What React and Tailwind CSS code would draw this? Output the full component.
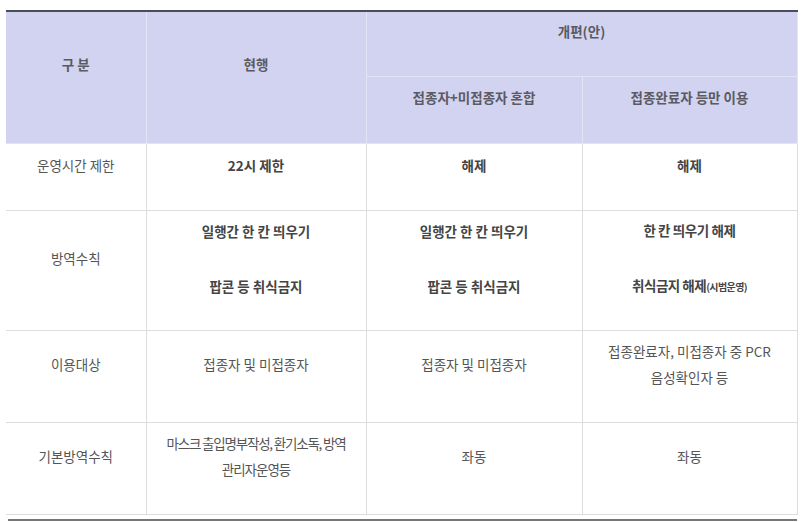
const font = { fontFamily: '"Noto Sans CJK KR", "Noto Sans", sans-serif' };

function Cell({ children, className = '', ...rest }) {
  return (
    <td className={`border border-[#dddddd] text-center align-middle p-0 ${className}`} {...rest}>
      <div className="pb-[24px] leading-[26px]">{children}</div>
    </td>
  );
}

function Head({ children, className = '', ...rest }) {
  return (
    <th className={`border border-[#e4e4f4] bg-[#d2d3f0] text-center align-middle p-0 font-bold text-[#5a5a63] ${className}`} {...rest}>
      <div className="pb-[26px] leading-[26px]">{children}</div>
    </th>
  );
}

export default function App() {
  return (
    <div className="w-[802px] h-[522px] bg-white pt-[10px] pl-[6px] overflow-hidden" style={font}>
      <table className="table-fixed border-collapse w-[791px] text-[13.5px] text-[#555555] border-t-2 border-t-[#4a4d5a]">
        <colgroup>
          <col className="w-[140px]" />
          <col className="w-[220px]" />
          <col className="w-[216px]" />
          <col className="w-[215px]" />
        </colgroup>
        <thead>
          <tr className="h-[65px]">
            <Head rowSpan={2} className="border-t-[#4a4d5a] border-l-0">구 분</Head>
            <Head rowSpan={2} className="border-t-[#4a4d5a]">현행</Head>
            <Head colSpan={2} className="border-t-[#4a4d5a]">개편(안)</Head>
          </tr>
          <tr className="h-[67px]">
            <Head className="font-semibold">접종자+미접종자 혼합</Head>
            <Head className="font-semibold">접종완료자 등만 이용</Head>
          </tr>
        </thead>
        <tbody>
          <tr className="h-[67px]">
            <Cell className="border-l-0">운영시간 제한</Cell>
            <Cell className="font-bold text-[#444444]">22시 제한</Cell>
            <Cell className="font-bold text-[#444444]">해제</Cell>
            <Cell className="font-bold text-[#444444]">해제</Cell>
          </tr>
          <tr className="h-[120px]">
            <Cell className="border-l-0">방역수칙</Cell>
            <Cell className="font-bold text-[#444444]">
              <p>일행간 한 칸 띄우기</p>
              <p className="mt-[29px]">팝콘 등 취식금지</p>
            </Cell>
            <Cell className="font-bold text-[#444444]">
              <p>일행간 한 칸 띄우기</p>
              <p className="mt-[29px]">팝콘 등 취식금지</p>
            </Cell>
            <Cell className="font-bold text-[#444444]">
              <p className="tracking-[-0.4px]">한 칸 띄우기 해제</p>
              <p className="mt-[29px] tracking-[-0.5px]">
                취식금지 해제<span className="text-[10px] tracking-[-0.6px]">(시범운영)</span>
              </p>
            </Cell>
          </tr>
          <tr className="h-[92px]">
            <Cell className="border-l-0">이용대상</Cell>
            <Cell>접종자 및 미접종자</Cell>
            <Cell>접종자 및 미접종자</Cell>
            <Cell>
              <p>접종완료자, 미접종자 중 PCR</p>
              <p>음성확인자 등</p>
            </Cell>
          </tr>
          <tr className="h-[92px]">
            <Cell className="border-l-0">기본방역수칙</Cell>
            <Cell>
              <p className="tracking-[-1.2px]">마스크 출입명부작성, 환기소독, 방역</p>
              <p className="tracking-[-1px]">관리자운영등</p>
            </Cell>
            <Cell>좌동</Cell>
            <Cell>좌동</Cell>
          </tr>
        </tbody>
      </table>
      <div className="mt-[4px] ml-[2px] w-[789px] h-[2px] bg-[#777777]" />
    </div>
  );
}
